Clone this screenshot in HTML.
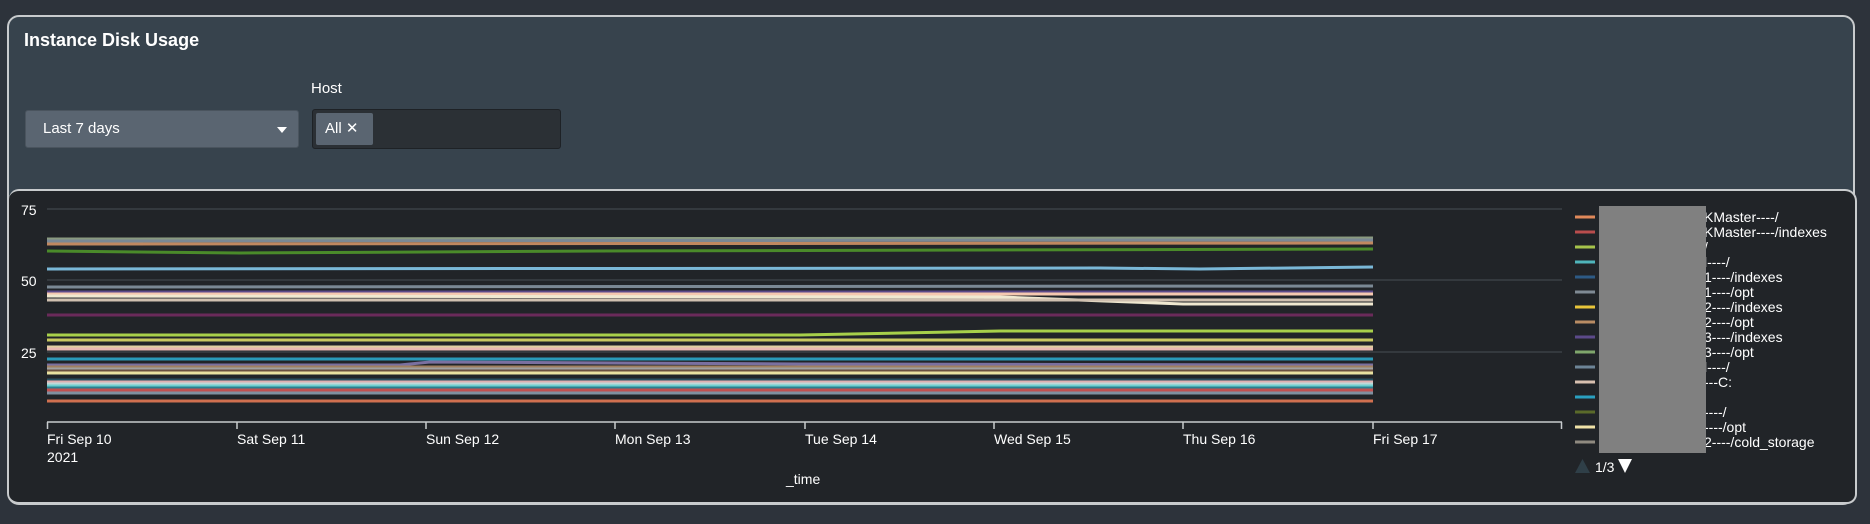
<!DOCTYPE html>
<html><head><meta charset="utf-8"><style>
body{margin:0;width:1870px;height:524px;background:#2d333b;font-family:"Liberation Sans",sans-serif;overflow:hidden;position:relative}
.outer{position:absolute;left:7px;top:15px;width:1848px;height:490px;background:#37434d;border:2px solid #c8cbcd;border-radius:12px;box-sizing:border-box}
.title{position:absolute;left:24px;top:30px;color:#fff;font-weight:bold;font-size:18px}
.host{position:absolute;left:311px;top:80px;color:#fff;font-size:15px}
.dd{position:absolute;left:25px;top:110px;width:274px;height:38px;background:#5a6571;border:1px solid #4a545e;border-radius:3px;box-sizing:border-box;color:#fff;font-size:15px;line-height:36px;padding-left:17px}
.dd:after{content:"";position:absolute;left:251px;top:16px;border-left:5px solid transparent;border-right:5px solid transparent;border-top:6px solid #fff}
.hi{position:absolute;left:312px;top:109px;width:249px;height:40px;background:#2b3035;border:1px solid #1e2226;border-radius:3px;box-sizing:border-box}
.chip{position:absolute;left:3px;top:3px;width:57px;height:32px;background:#5a6571;border-radius:2px;color:#fff;font-size:15px;line-height:32px;padding-left:9px;box-sizing:border-box}
.chart{position:absolute;left:9px;top:189px;width:1848px;height:315px;background:#212428;border-top:2px solid #c8cbcd;border-right:2px solid #c8cbcd;border-bottom:2px solid #c8cbcd;border-radius:10px 12px 10px 10px;box-sizing:border-box}
svg{position:absolute;left:0;top:0}
</style></head><body>
<div class="outer"></div>
<div class="title">Instance Disk Usage</div>
<div class="host">Host</div>
<div class="dd">Last 7 days</div>
<div class="hi"><div class="chip">All ✕</div></div>
<div class="chart"></div>
<svg width="1870" height="524" font-family="Liberation Sans, sans-serif">
<g stroke="#3a4046" stroke-width="1.5"><line x1="47" y1="209" x2="1562" y2="209"/><line x1="47" y1="280" x2="1562" y2="280"/><line x1="47" y1="352" x2="1562" y2="352"/></g>
<g fill="#fff" font-size="14"><text x="21" y="215">75</text><text x="21" y="286">50</text><text x="21" y="358">25</text></g>
<g stroke-width="3" fill="none">
<line x1="47" y1="239" x2="1373" y2="238" stroke="#8a9a80"/>
<line x1="47" y1="241" x2="1373" y2="240" stroke="#7a8894"/>
<line x1="47" y1="244" x2="1373" y2="243" stroke="#c08860"/>
<path d="M47 251 L240 253 L600 251 L1373 249" stroke="#4a8a2a"/>
<path d="M47 269 L1100 268 L1200 269 L1373 267" stroke="#7ab8d8"/>
<line x1="47" y1="287" x2="1373" y2="286" stroke="#7a8894"/>
<line x1="47" y1="292" x2="1373" y2="292" stroke="#5c4a8a"/>
<line x1="47" y1="294" x2="1373" y2="294" stroke="#f5c8b0"/>
<path d="M47 296 L1000 297 L1183 304 L1373 304" stroke="#f0e8d0"/>
<line x1="47" y1="300" x2="1373" y2="300" stroke="#d0c0b0"/>
<line x1="47" y1="315" x2="1373" y2="315" stroke="#6a2a5a"/>
<path d="M47 335 L800 335 L1000 331 L1373 331" stroke="#a8d04a"/>
<line x1="47" y1="340" x2="1373" y2="340" stroke="#c8c860"/>
<line x1="47" y1="347" x2="1373" y2="347" stroke="#e0d0a0"/>
<line x1="47" y1="349" x2="1373" y2="349" stroke="#e8b8b0"/>
<line x1="47" y1="359" x2="1373" y2="359" stroke="#2a9ab8"/>
<path d="M47 365 L400 365 L430 362 L800 364 L1373 365" stroke="#7a70a0"/>
<line x1="47" y1="367" x2="1373" y2="367" stroke="#a08060"/>
<line x1="47" y1="369" x2="1373" y2="369" stroke="#a0a0a0"/>
<line x1="47" y1="371" x2="1373" y2="371" stroke="#6a5040"/>
<line x1="47" y1="373" x2="1373" y2="373" stroke="#e8e0a0"/>
<line x1="47" y1="380" x2="1373" y2="380" stroke="#2a5060"/>
<line x1="47" y1="382" x2="1373" y2="382" stroke="#e0b0b0"/>
<line x1="47" y1="384" x2="1373" y2="384" stroke="#c0d8d8"/>
<line x1="47" y1="386" x2="1373" y2="386" stroke="#70d0d0"/>
<line x1="47" y1="388" x2="1373" y2="388" stroke="#2a8090"/>
<line x1="47" y1="390" x2="1373" y2="390" stroke="#c05050"/>
<line x1="47" y1="393" x2="1373" y2="393" stroke="#8090a0"/>
<line x1="47" y1="401" x2="1373" y2="401" stroke="#d07050"/>
</g>
<g stroke="#c8cbcd" stroke-width="1.5" fill="none"><line x1="47" y1="422" x2="1562" y2="422"/>
<path d="M47.5 422v7M237 422v7M426 422v7M615 422v7M805 422v7M994 422v7M1183 422v7M1373 422v7M1561.5 422v7"/></g>
<g fill="#fff" font-size="14"><text x="47" y="444">Fri Sep 10</text><text x="47" y="462">2021</text>
<text x="237" y="444">Sat Sep 11</text><text x="426" y="444">Sun Sep 12</text><text x="615" y="444">Mon Sep 13</text><text x="805" y="444">Tue Sep 14</text><text x="994" y="444">Wed Sep 15</text><text x="1183" y="444">Thu Sep 16</text><text x="1373" y="444">Fri Sep 17</text>
<text x="786" y="484">_time</text></g>
<g stroke-width="3">
<line x1="1575" y1="217" x2="1595" y2="217" stroke="#e0895a"/>
<line x1="1575" y1="232" x2="1595" y2="232" stroke="#b94d4d"/>
<line x1="1575" y1="247" x2="1595" y2="247" stroke="#a6c34b"/>
<line x1="1575" y1="262" x2="1595" y2="262" stroke="#4fb5bb"/>
<line x1="1575" y1="277" x2="1595" y2="277" stroke="#2d5a85"/>
<line x1="1575" y1="292" x2="1595" y2="292" stroke="#7f8a94"/>
<line x1="1575" y1="307" x2="1595" y2="307" stroke="#e8c53a"/>
<line x1="1575" y1="322" x2="1595" y2="322" stroke="#b98c64"/>
<line x1="1575" y1="337" x2="1595" y2="337" stroke="#5c4a8a"/>
<line x1="1575" y1="352" x2="1595" y2="352" stroke="#7fa66c"/>
<line x1="1575" y1="367" x2="1595" y2="367" stroke="#6d8597"/>
<line x1="1575" y1="382" x2="1595" y2="382" stroke="#d8c0b0"/>
<line x1="1575" y1="397" x2="1595" y2="397" stroke="#2aa0c0"/>
<line x1="1575" y1="412" x2="1595" y2="412" stroke="#5a6a2a"/>
<line x1="1575" y1="427" x2="1595" y2="427" stroke="#f0e2a8"/>
<line x1="1575" y1="442" x2="1595" y2="442" stroke="#8f8a80"/>
</g>
<g fill="#fff" font-size="14">
<text x="1704" y="222">KMaster----/</text><text x="1704" y="237">KMaster----/indexes</text><text x="1704" y="252">/</text><text x="1704" y="267">l----/</text><text x="1704" y="282">1----/indexes</text><text x="1704" y="297">1----/opt</text><text x="1704" y="312">2----/indexes</text><text x="1704" y="327">2----/opt</text><text x="1704" y="342">3----/indexes</text><text x="1704" y="357">3----/opt</text><text x="1704" y="372">l----/</text><text x="1704" y="387">---C:</text><text x="1704" y="417">----/</text><text x="1704" y="432">----/opt</text><text x="1704" y="447">2----/cold_storage</text>
</g>
<rect x="1599" y="206" width="107" height="247" fill="#808080"/>
<path d="M1575 473 L1582.5 459 L1590 473Z" fill="#2f3f48"/>
<text x="1595" y="472" fill="#fff" font-size="14">1/3</text>
<path d="M1618 459 L1632 459 L1625 473Z" fill="#fff"/>
</svg>
</body></html>
